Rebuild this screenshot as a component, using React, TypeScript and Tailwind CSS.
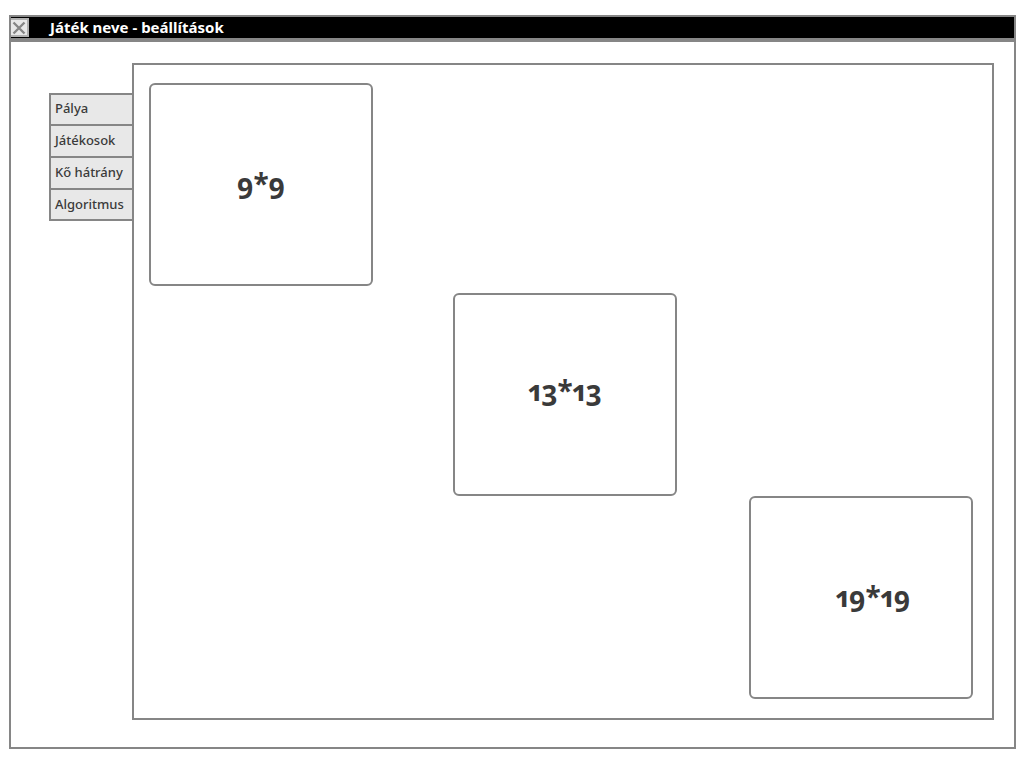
const tabs = ["Pálya", "Játékosok", "Kő hátrány", "Algoritmus"];

const boards = [
  { label: "9*9", place: "col-start-1 row-start-1 mb-[7px] pb-1" },
  { label: "13*13", place: "col-start-2 row-start-2 pb-2.5" },
  { label: "19*19", place: "col-start-3 row-start-3 pb-1 pl-6" },
];

function TitleBar() {
  return (
    <header className="flex h-[25px] items-start border-b-4 border-[#868686] bg-black">
      <button
        type="button"
        aria-label="Bezárás"
        className="mt-px flex h-[19px] w-[18px] items-center justify-center border-2 border-l-0 border-[#b0b0b0] bg-[#e8e8e8]"
      >
        <svg viewBox="0 0 14 14" className="size-3.5" fill="none" stroke="#868686" strokeWidth="2.4">
          <path d="M1.5 1.5 12.5 12.5M12.5 1.5 1.5 12.5" />
        </svg>
      </button>
      <h1 className="ml-[21px] text-[15px] leading-[21px] font-bold text-white">
        Játék neve - beállítások
      </h1>
    </header>
  );
}

export default function App() {
  return (
    <div className="flex min-h-screen bg-white pt-[15px] pr-2 pb-[19px] pl-[9px] font-['Noto_Sans',sans-serif] text-[#3a3a3a]">
      <main className="flex flex-1 flex-col border-2 border-[#868686]">
        <TitleBar />
        <div className="flex flex-1 items-stretch pt-[21px] pr-5 pb-[27px] pl-[38px]">
          <nav className="mt-[30px] flex w-[83px] flex-col self-start border-2 border-r-0 border-[#868686] bg-[#e8e8e8]">
            {tabs.map((tab) => (
              <button
                key={tab}
                type="button"
                className="h-8 border-b-2 border-[#868686] pb-0.5 pl-1 text-left text-[13px] leading-5 font-medium whitespace-nowrap first:h-[31px] first:pb-1 last:h-[29px] last:border-b-0"
              >
                {tab}
              </button>
            ))}
          </nav>
          <section className="grid flex-1 grid-cols-[304fr_296fr_224px] content-start border-2 border-[#868686] pt-[18px] pr-[19px] pb-[19px] pl-[15px]">
            {boards.map((board) => (
              <button
                key={board.label}
                type="button"
                className={`h-[203px] w-56 rounded-md border-2 border-[#868686] text-[28px] leading-10 font-bold oldstyle-nums proportional-nums ${board.place}`}
              >
                {board.label}
              </button>
            ))}
          </section>
        </div>
      </main>
    </div>
  );
}
